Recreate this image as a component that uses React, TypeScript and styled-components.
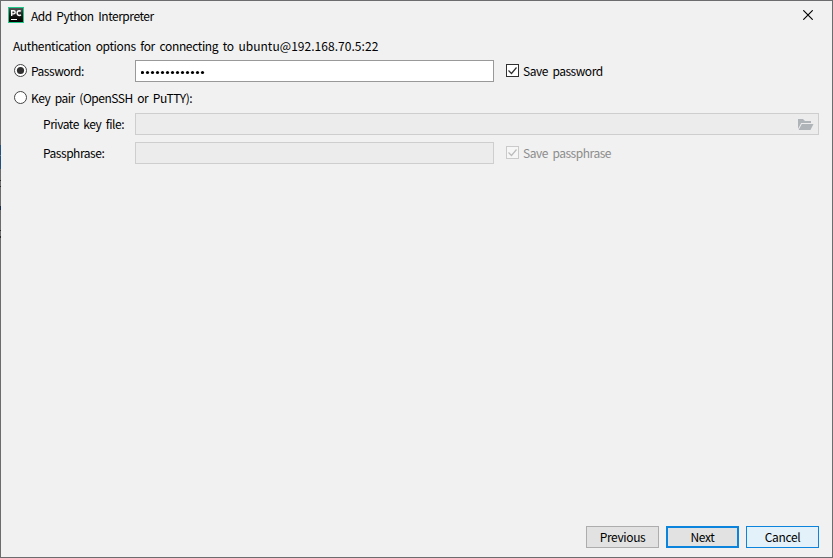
import React from "react";
import styled, { createGlobalStyle } from "styled-components";

const GlobalStyle = createGlobalStyle`
  * { box-sizing: border-box; }
  body { margin: 0; overflow: hidden; }
`;

const Frame = styled.div`
  width: 833px;
  height: 558px;
  padding: 1px;
  background:
    linear-gradient(
      #6c6b6e 145px, #245079 145px, #245079 155px, #557a9c 155px, #557a9c 156px,
      #245079 156px, #245079 169px, #6c6b6e 169px, #6c6b6e 180px, #29292b 180px,
      #29292b 181px, #6c6b6e 181px, #6c6b6e 186px, #29292b 186px, #29292b 187px,
      #6c6b6e 187px, #6c6b6e 206px, #1d2b49 206px, #1d2b49 210px,
      #6c6b6e 210px, #6c6b6e 230px, #29292b 230px, #29292b 231px, #6c6b6e 231px,
      #6c6b6e 236px, #29292b 236px, #29292b 238px, #6c6b6e 238px
    ) left / 1px 100% no-repeat,
    #6c6b6e;
`;

const Dialog = styled.div`
  height: 556px;
  display: flex;
  flex-direction: column;
  background: #f1f1f1;
  color: #000;
  font: 12px/20px "Noto Sans CJK KR", "Noto Sans", sans-serif;
  letter-spacing: -0.47px;
  word-spacing: 2.3px;
`;

const TitleBar = styled.header`
  height: 28px;
  display: flex;
  align-items: center;
  padding: 0 19px 0 7px;
`;

const Title = styled.h1`
  flex: 1;
  margin: 1px 0 0 7px;
  font: inherit;
`;

const Form = styled.main`
  flex: 1;
  padding: 7px 13px 0 12px;
`;

const Heading = styled.div`
  height: 20px;
  white-space: nowrap;
  letter-spacing: -0.36px;
`;

const Host = styled.span`
  letter-spacing: 0.04px;
`;

const Row = styled.div<{ $top: number }>`
  display: grid;
  grid-template-columns: 122px 359px 1fr;
  height: 22px;
  margin-top: ${(p) => p.$top}px;
  align-items: center;
`;

const Text = styled.span<{ $indent?: boolean; $muted?: boolean }>`
  white-space: nowrap;
  padding-left: ${(p) => (p.$indent ? 30 : 0)}px;
  color: ${(p) => (p.$muted ? "#8c8c8c" : "#000")};
`;

const Option = styled.label<{ $left?: number }>`
  display: flex;
  align-items: center;
  gap: 4px;
  padding-left: ${(p) => p.$left ?? 1}px;
  svg { flex: none; margin-top: -1px; }
`;

const Field = styled.div<{ $disabled?: boolean; $wide?: boolean }>`
  height: 22px;
  display: flex;
  align-items: center;
  justify-content: ${(p) => (p.$wide ? "flex-end" : "flex-start")};
  padding: 2px 4px 0 5px;
  grid-column: ${(p) => (p.$wide ? "2 / 4" : "auto")};
  border: 1px solid ${(p) => (p.$disabled ? "#cecece" : "#999")};
  background: ${(p) => (p.$disabled ? "#ececec" : "#fff")};
`;

const Footer = styled.footer`
  display: flex;
  justify-content: flex-end;
  gap: 7px;
  padding: 0 13px 9px;
`;

const Button = styled.button<{ $kind?: "default" | "hover" }>`
  width: 73px;
  height: 22px;
  padding: 0;
  font: inherit;
  line-height: 18px;
  letter-spacing: -0.36px;
  color: #000;
  border: ${(p) => (p.$kind === "default" ? "2px solid #0a84dc" : p.$kind ? "1px solid #0a84dc" : "1px solid #adadad")};
  background: ${(p) => (p.$kind === "hover" ? "#e3f1fa" : "#e2e2e2")};
`;

const Logo = () => (
  <svg width="16" height="16" viewBox="0 0 16 16">
    <defs>
      <linearGradient id="logoFill" x1="0" y1="0" x2="0" y2="1">
        <stop offset="0" stopColor="#555" />
        <stop offset=".55" stopColor="#181818" />
        <stop offset="1" stopColor="#000" />
      </linearGradient>
    </defs>
    <rect width="16" height="16" fill="#21c98b" />
    <rect x="1" y="1" width="14" height="14" fill="url(#logoFill)" />
    <path d="M3.7 9V3.7h1.9a1.6 1.6 0 0 1 0 3.2H3.7M12.8 4.4a2 2 0 0 0-1.4-.7c-1.5 0-2.3 1.1-2.3 2.4s.8 2.4 2.3 2.4c.6 0 1-.2 1.5-.7" fill="none" stroke="#fff" strokeWidth="1.4" />
    <rect x="3" y="12" width="6" height="1" fill="#fff" />
  </svg>
);

const Radio = ({ on }: { on?: boolean }) => (
  <svg width="13" height="13" viewBox="0 0 13 13">
    <circle cx="6.5" cy="6.5" r="6" fill="#fff" stroke="#444" />
    {on && <circle cx="6.5" cy="6.5" r="3.6" fill="#303030" />}
  </svg>
);

const Check = ({ muted }: { muted?: boolean }) => (
  <svg width="13" height="13" viewBox="0 0 13 13">
    <rect x=".5" y=".5" width="12" height="12" fill={muted ? "#f6f6f6" : "#fff"} stroke={muted ? "#cacaca" : "#303030"} />
    <path d="M2.5 6.5l3 3 5-6" fill="none" stroke={muted ? "#bcbcbc" : "#303030"} strokeWidth="1.2" />
  </svg>
);

const Dots = () => (
  <svg width="66" height="5" viewBox="0 0 66 5">
    {Array.from({ length: 13 }, (_, i) => (
      <circle key={i} cx={1.5 + i * 5} cy="2.5" r="1.6" fill="#000" />
    ))}
  </svg>
);

const Close = () => (
  <svg width="10" height="10" viewBox="0 0 10 10">
    <path d="M.3.3l9.4 9.4M9.7.3L.3 9.7" stroke="#000" strokeWidth="1.15" />
  </svg>
);

const Folder = () => (
  <svg width="16" height="12" viewBox="0 0 16 12">
    <path d="M0 10V0h5l2 2h6v2H3.2L0 10z" fill="#afb4b9" />
    <path d="M3.8 5H15.5l-3 6H.6z" fill="#afb4b9" />
  </svg>
);

export default function App() {
  return (
    <Frame>
      <GlobalStyle />
      <Dialog>
        <TitleBar>
          <Logo />
          <Title><Text>Add Python Interpreter</Text></Title>
          <Close />
        </TitleBar>
        <Form>
          <Heading>Authentication options for connecting to <Host>ubuntu@192.168.70.5:22</Host></Heading>
          <Row $top={4}>
            <Option><Radio on /><Text>Password:</Text></Option>
            <Field><Dots /></Field>
            <Option $left={12}><Check /><Text>Save password</Text></Option>
          </Row>
          <Row $top={5}>
            <Option><Radio /><Text>Key pair (OpenSSH or PuTTY):</Text></Option>
          </Row>
          <Row $top={4}>
            <Text $indent>Private key file:</Text>
            <Field $disabled $wide><Folder /></Field>
          </Row>
          <Row $top={7}>
            <Text $indent>Passphrase:</Text>
            <Field $disabled />
            <Option $left={12}><Check muted /><Text $muted>Save passphrase</Text></Option>
          </Row>
        </Form>
        <Footer>
          <Button>Previous</Button>
          <Button $kind="default">Next</Button>
          <Button $kind="hover">Cancel</Button>
        </Footer>
      </Dialog>
    </Frame>
  );
}
